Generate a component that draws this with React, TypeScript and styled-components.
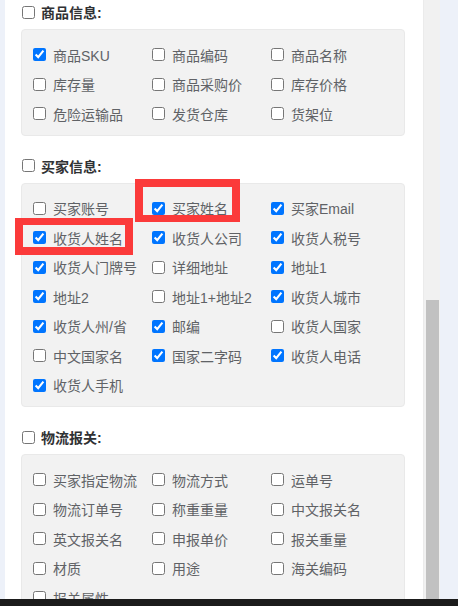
import styled, { createGlobalStyle } from 'styled-components';

type Field = {
  label: string;
  checked?: boolean;
  mark?: 'buyer' | 'receiver';
};

type Group = {
  title: string;
  fields: Field[];
};

const groups: Group[] = [
  {
    title: '商品信息:',
    fields: [
      { label: '商品SKU', checked: true },
      { label: '商品编码' },
      { label: '商品名称' },
      { label: '库存量' },
      { label: '商品采购价' },
      { label: '库存价格' },
      { label: '危险运输品' },
      { label: '发货仓库' },
      { label: '货架位' },
    ],
  },
  {
    title: '买家信息:',
    fields: [
      { label: '买家账号' },
      { label: '买家姓名', checked: true, mark: 'buyer' },
      { label: '买家Email', checked: true },
      { label: '收货人姓名', checked: true, mark: 'receiver' },
      { label: '收货人公司', checked: true },
      { label: '收货人税号', checked: true },
      { label: '收货人门牌号', checked: true },
      { label: '详细地址' },
      { label: '地址1', checked: true },
      { label: '地址2', checked: true },
      { label: '地址1+地址2' },
      { label: '收货人城市', checked: true },
      { label: '收货人州/省', checked: true },
      { label: '邮编', checked: true },
      { label: '收货人国家' },
      { label: '中文国家名' },
      { label: '国家二字码', checked: true },
      { label: '收货人电话', checked: true },
      { label: '收货人手机', checked: true },
    ],
  },
  {
    title: '物流报关:',
    fields: [
      { label: '买家指定物流' },
      { label: '物流方式' },
      { label: '运单号' },
      { label: '物流订单号' },
      { label: '称重重量' },
      { label: '中文报关名' },
      { label: '英文报关名' },
      { label: '申报单价' },
      { label: '报关重量' },
      { label: '材质' },
      { label: '用途' },
      { label: '海关编码' },
      { label: '报关属性' },
    ],
  },
];

const GlobalStyle = createGlobalStyle`
  html, body {
    margin: 0;
    padding: 0;
    height: 606px;
    overflow: hidden;
    background: #edf1f9;
  }
  body {
    font-family: "Liberation Sans", "Noto Sans CJK SC", sans-serif;
  }
`;

const Screen = styled.div`
  display: flex;
  height: 606px;
  padding-left: 5px;
  box-sizing: border-box;
`;

const Panel = styled.div`
  display: flex;
  width: 435px;
  height: 606px;
  background: #fff;
`;

const Content = styled.div`
  width: 418px;
  padding: 2px 0 0 16px;
  box-sizing: border-box;
  overflow: hidden;
`;

const Track = styled.div`
  display: flex;
  flex-direction: column;
  width: 17px;
  padding: 0 1px 0 2px;
  box-sizing: border-box;
  background: #f1f1f1;
  border-left: 1px solid #ebebeb;
`;

const Thumb = styled.div`
  margin-top: 300px;
  flex: 1;
  background: #c1c1c1;
`;

const Section = styled.section`
  & + & {
    margin-top: 20px;
  }
`;

const Header = styled.label`
  display: flex;
  align-items: center;
  height: 20px;
  padding-left: 1px;
  margin-bottom: 7px;
  font-size: 14px;
  font-weight: 700;
  color: #303133;
`;

const Box = styled.div`
  width: 384px;
  box-sizing: border-box;
  padding: 10px 0 6px 11px;
  background: #f2f2f2;
  border: 1px solid #e9e9e9;
  border-radius: 4px;
  display: grid;
  grid-template-columns: repeat(3, 119px);
  grid-auto-rows: 29.5px;
`;

const Item = styled.label`
  position: relative;
  display: flex;
  align-items: center;
  font-size: 14px;
  color: #606266;
  white-space: nowrap;
`;

const Check = styled.input.attrs({ type: 'checkbox', readOnly: true })<{ $gap: number }>`
  width: 13px;
  height: 13px;
  margin: 0 ${(p) => p.$gap}px 0 0;
  flex: none;
`;

const Mark = styled.span<{ $kind: 'buyer' | 'receiver' }>`
  position: absolute;
  border: 8px solid #fb3a3a;
  box-sizing: border-box;
  pointer-events: none;
  ${(p) =>
    p.$kind === 'buyer'
      ? 'left: -17px; top: -15px; width: 105px; height: 43px; border-width: 8px 8px 7px 8px;'
      : 'left: -18px; top: -5px; width: 118px; height: 37px; border-width: 7px 8px 8px 8px;'}
`;

const BottomBar = styled.div`
  position: fixed;
  left: 0;
  right: 0;
  bottom: 0;
  height: 7px;
  background: #1b1b1b;
`;

export default function App() {
  return (
    <>
      <GlobalStyle />
      <Screen>
        <Panel>
          <Content>
            {groups.map((g) => (
              <Section key={g.title}>
                <Header>
                  <Check $gap={6} checked={false} />
                  {g.title}
                </Header>
                <Box>
                  {g.fields.map((f) => (
                    <Item key={f.label}>
                      <Check $gap={7} checked={!!f.checked} />
                      {f.label}
                      {f.mark && <Mark $kind={f.mark} />}
                    </Item>
                  ))}
                </Box>
              </Section>
            ))}
          </Content>
          <Track>
            <Thumb />
          </Track>
        </Panel>
      </Screen>
      <BottomBar />
    </>
  );
}
